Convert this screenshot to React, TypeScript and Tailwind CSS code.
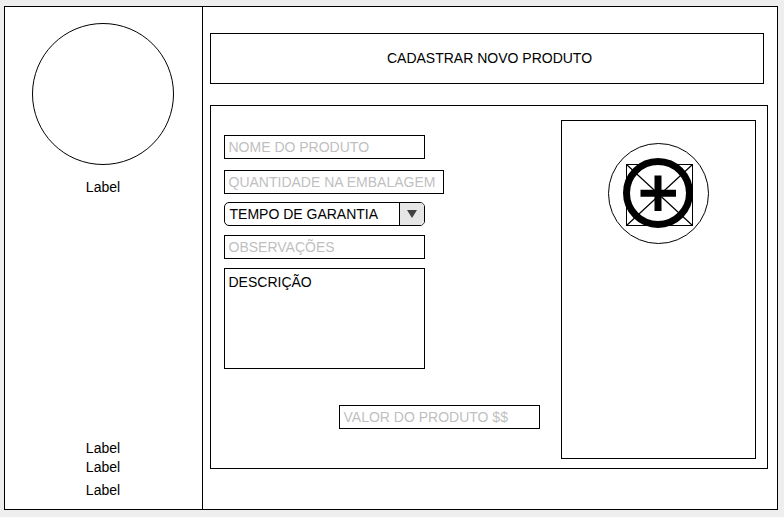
import type { ReactNode } from "react";

function Field({ children, className }: { children: ReactNode; className: string }) {
  return (
    <div className={`flex h-6 items-center border border-black pl-[3.5px] text-[#bfbfbf] ${className}`}>
      <span className="whitespace-nowrap">{children}</span>
    </div>
  );
}

function AddPicture() {
  return (
    <svg width="101" height="101" viewBox="0 0 101 101" fill="none" stroke="#000">
      <circle cx="50.5" cy="50.5" r="50" fill="#fff" />
      <rect x="18.5" y="21.5" width="66" height="61" />
      <path d="M18.5 21.5L84.5 82.5M84.5 21.5L18.5 82.5" strokeWidth="1.2" />
      <circle cx="50" cy="50" r="31.5" strokeWidth="7" />
      <path d="M32.5 50.2H68M50 32.5V68" strokeWidth="7" />
    </svg>
  );
}

function Sidebar() {
  return (
    <aside className="flex w-[198px] shrink-0 flex-col items-center border-r border-black pt-4 leading-4">
      <div className="mr-px h-[142px] w-[142px] rounded-full border border-black" />
      <span className="mt-[14px] mr-px">Label</span>
      <div className="mt-auto mr-px flex flex-col items-center pb-[11px]">
        <span>Label</span>
        <span className="mt-[3px]">Label</span>
        <span className="mt-[7px]">Label</span>
      </div>
    </aside>
  );
}

export default function App() {
  return (
    <div className="h-[517px] w-[784px] bg-[#eeeeee] pt-[6px] pl-1 font-['Liberation_Sans',Arial,sans-serif] text-[14px] leading-4 text-black">
      <div className="flex h-[504px] w-[774px] border border-black bg-white">
        <Sidebar />
        <main className="flex flex-col items-start pt-[26px] pl-[7px]">
          <header className="flex h-[51px] w-[554px] items-center justify-center border border-black pb-[2px] pl-[5px]">
            <h1>CADASTRAR NOVO PRODUTO</h1>
          </header>
          <section className="mt-[21px] flex h-[364px] w-[558px] justify-between border border-black pr-[11px] pl-[13px]">
            <form className="flex w-[316px] flex-col items-start pt-[29px]">
              <Field className="w-[201px]">NOME DO PRODUTO</Field>
              <Field className="mt-[11px] w-[220px]">QUANTIDADE NA EMBALAGEM</Field>
              <div className="mt-2 flex h-6 w-[201px] overflow-hidden rounded-[5px] border border-black">
                <span className="flex flex-1 items-center pl-[4.5px] whitespace-nowrap">TEMPO DE GARANTIA</span>
                <span className="flex w-[25px] items-center justify-center border-l border-black bg-[#e6e6e6]">
                  <svg width="10" height="8" viewBox="0 0 10 8" fill="#404040">
                    <path d="M0 0H10L5 8Z" />
                  </svg>
                </span>
              </div>
              <Field className="mt-[9px] w-[201px]">OBSERVAÇÕES</Field>
              <div className="mt-[9px] h-[101px] w-[201px] border border-black pt-[5px] pl-[3.5px]">DESCRIÇÃO</div>
              <Field className="mt-9 w-[201px] self-end">VALOR DO PRODUTO $$</Field>
            </form>
            <div className="mt-[14px] flex h-[339px] w-[195px] justify-center border border-black pt-[22px]">
              <AddPicture />
            </div>
          </section>
        </main>
      </div>
    </div>
  );
}
